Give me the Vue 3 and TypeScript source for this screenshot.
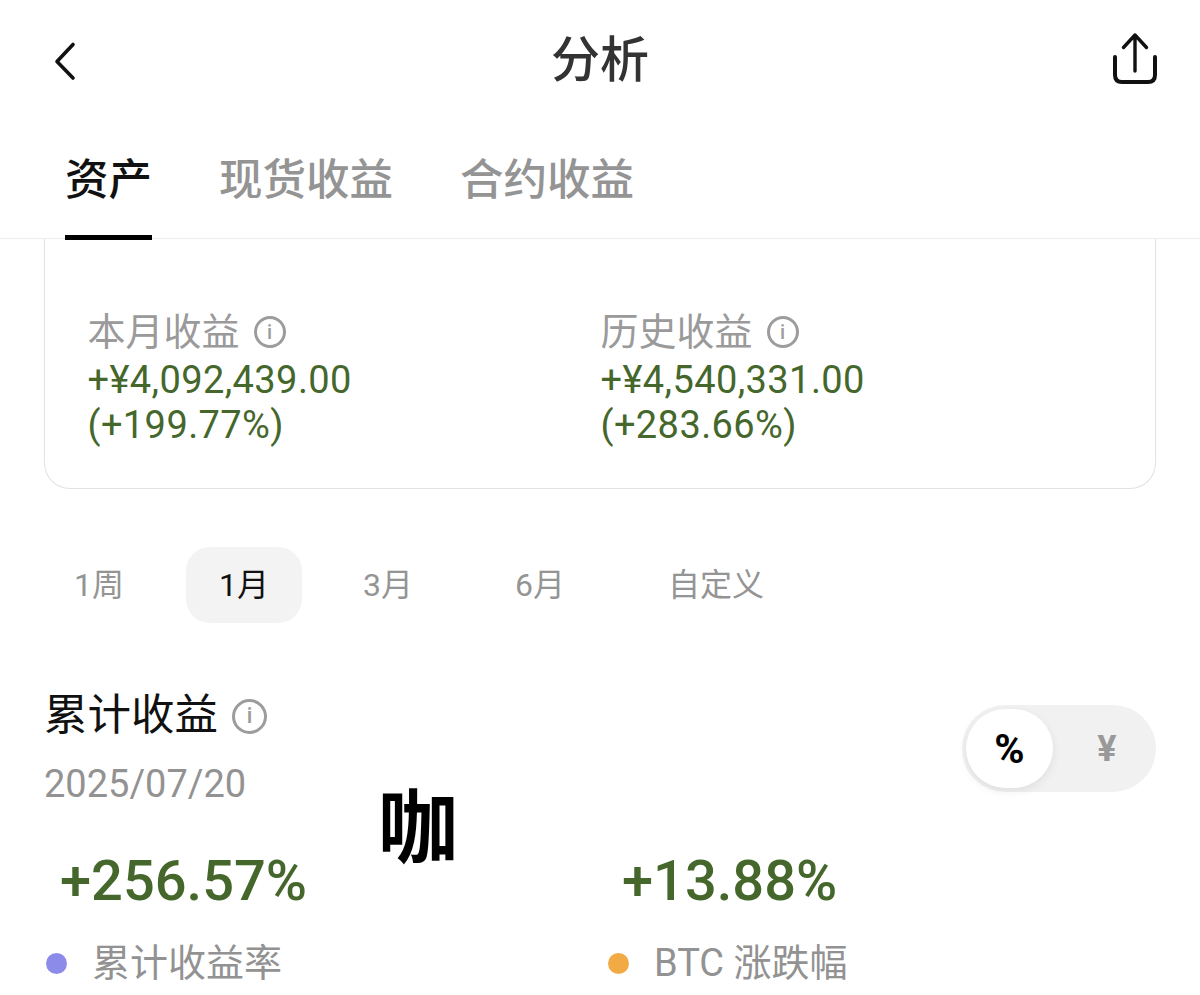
<script setup lang="ts">
const tabs: string[] = ['资产', '现货收益', '合约收益']
const periods: string[] = ['1周', '1月', '3月', '6月', '自定义']
const stats = [
  { label: '本月收益', value: '+¥4,092,439.00', pct: '(+199.77%)' },
  { label: '历史收益', value: '+¥4,540,331.00', pct: '(+283.66%)' },
]
const metrics = [
  { value: '+256.57%', label: '累计收益率', dot: '#8d8bea' },
  { value: '+13.88%', label: 'BTC 涨跌幅', dot: '#f2aa45' },
]
</script>

<template>
  <div class="page">
    <header class="nav">
      <svg class="back" width="26" height="40" viewBox="0 0 26 40" fill="none">
        <path d="M21 3.5 5 20.5 21 37" stroke="#111" stroke-width="3.6" stroke-linecap="round" stroke-linejoin="round" />
      </svg>
      <h1 class="title">分析</h1>
      <svg class="share" width="50" height="58" viewBox="0 0 50 58" fill="none">
        <path d="M25 5V41M13.5 17.5 25 5 36.5 17.5" stroke="#111" stroke-width="3.4" stroke-linecap="round" stroke-linejoin="round" />
        <path d="M5 27V45Q5 52 12 52H38Q45 52 45 45V27" stroke="#111" stroke-width="4" stroke-linecap="round" />
      </svg>
    </header>

    <nav class="tabs">
      <span v-for="(tab, i) in tabs" :key="tab" class="tab" :class="{ active: i === 0 }">{{ tab }}</span>
    </nav>

    <section class="card">
      <div v-for="s in stats" :key="s.label" class="stat">
        <div class="stat-label">
          {{ s.label }}
          <span class="info small"><i>i</i></span>
        </div>
        <div class="stat-value">{{ s.value }}</div>
        <div class="stat-value">{{ s.pct }}</div>
      </div>
    </section>

    <div class="periods">
      <span v-for="(p, i) in periods" :key="p" class="period" :class="{ active: i === 1 }">{{ p }}</span>
    </div>

    <section class="summary">
      <div class="summary-head">
        <div>
          <div class="summary-title">
            累计收益
            <span class="info"><i>i</i></span>
          </div>
          <div class="date">2025/07/20</div>
        </div>
        <div class="toggle">
          <span class="knob">%</span>
          <span class="yen">¥</span>
        </div>
      </div>
      <div class="metrics">
        <div v-for="m in metrics" :key="m.label" class="metric">
          <div class="metric-value">{{ m.value }}</div>
          <div class="legend">
            <span class="dot" :style="{ background: m.dot }"></span>
            <span>{{ m.label }}</span>
          </div>
        </div>
      </div>
    </section>

    <div class="mark">咖</div>
  </div>
</template>

<style>
html, body { margin: 0; background: #fff; overflow: hidden; }
</style>

<style scoped>
.page {
  position: relative;
  width: 1200px;
  height: 995px;
  overflow: hidden;
  background: #fff;
  font-family: Roboto, "Noto Sans CJK SC", sans-serif;
  color: #111;
}
.nav {
  height: 120px;
  padding: 0 40px;
  display: grid;
  grid-template-columns: 1fr auto 1fr;
  align-items: center;
}
.back { margin: 2px 0 0 12px; }
.share { margin-top: -2px; justify-self: end; }
.title {
  margin: 0;
  font-size: 49px;
  font-weight: 500;
  color: #333;
  line-height: 1;
}
.tabs {
  height: 119px;
  box-sizing: border-box;
  padding-left: 65px;
  display: flex;
  gap: 67px;
  border-bottom: 1px solid #ececec;
}
.tab {
  height: 120px;
  box-sizing: border-box;
  padding-top: 34px;
  font-size: 43.5px;
  line-height: 54px;
  font-weight: 500;
  color: #949494;
}
.tab.active {
  color: #111;
  border-bottom: 5px solid #000;
}
.card {
  margin: 0 44px;
  height: 250px;
  box-sizing: border-box;
  border: 1.5px solid #e2e2e2;
  border-top: 0;
  border-radius: 0 0 26px 26px;
  padding: 68px 0 0 42.5px;
  display: grid;
  grid-template-columns: 513px 1fr;
}
.stat-label {
  display: flex;
  align-items: center;
  gap: 14px;
  font-size: 38px;
  line-height: 50px;
  color: #9a9a9a;
}
.stat-value {
  font-size: 38px;
  line-height: 45px;
  letter-spacing: 0.4px;
  color: #45672c;
}
.stat-label + .stat-value { margin-top: 1px; }
.info {
  width: 35px;
  height: 35px;
  box-sizing: border-box;
  border: 3px solid #9c9c9c;
  border-radius: 50%;
  display: inline-flex;
  align-items: center;
  justify-content: center;
  color: #9c9c9c;
}
.info i {
  font-style: normal;
  font-size: 22px;
  font-weight: 500;
  line-height: 1;
}
.info.small {
  width: 32px;
  height: 32px;
}
.info.small i { font-size: 20px; }
.periods {
  margin-top: 58px;
  padding-left: 74px;
  height: 76px;
  display: flex;
  align-items: center;
  font-size: 32px;
  color: #949494;
}
.period {
  height: 76px;
  line-height: 76px;
}
.period:nth-child(1) { width: 112px; }
.period:nth-child(2) {
  width: 116px;
  text-align: center;
}
.period:nth-child(3) { margin-left: 61px; width: 152px; }
.period:nth-child(4) { width: 153px; }
.period.active {
  background: #f3f3f3;
  border-radius: 24px;
  color: #111;
}
.summary { padding: 0 44px; }
.summary-head {
  margin-top: 66px;
  display: flex;
  justify-content: space-between;
  align-items: flex-start;
}
.summary-title {
  display: flex;
  align-items: center;
  gap: 14px;
  font-size: 43.5px;
  line-height: 54px;
  color: #111;
}
.date {
  margin-top: 19px;
  font-size: 38px;
  line-height: 44px;
  color: #929292;
}
.toggle {
  margin-top: 16px;
  width: 194px;
  height: 87px;
  box-sizing: border-box;
  padding: 4px;
  border-radius: 44px;
  background: #f1f1f1;
  display: flex;
  align-items: center;
}
.knob {
  width: 87px;
  height: 79px;
  border-radius: 40px;
  background: #fff;
  box-shadow: 0 3px 10px rgba(0, 0, 0, 0.08);
  display: flex;
  align-items: center;
  justify-content: center;
  font-size: 41px;
  font-weight: 700;
  color: #000;
}
.yen {
  flex: 1;
  padding-left: 9px;
  text-align: center;
  font-size: 36px;
  font-weight: 700;
  color: #999;
}
.metrics {
  margin-top: 42px;
  display: grid;
  grid-template-columns: 562px 1fr;
  padding-left: 2px;
}
.metric-value {
  padding-left: 14px;
  font-size: 56px;
  line-height: 66px;
  font-weight: 500;
  color: #45672c;
}
.legend {
  margin-top: 26px;
  display: flex;
  align-items: center;
  gap: 25px;
  font-size: 38px;
  line-height: 46px;
  color: #929292;
}
.dot {
  width: 21px;
  height: 21px;
  border-radius: 50%;
}
.mark {
  position: absolute;
  left: 378px;
  top: 783px;
  font-size: 80px;
  line-height: 92px;
  font-weight: 700;
  color: #000;
}
</style>
